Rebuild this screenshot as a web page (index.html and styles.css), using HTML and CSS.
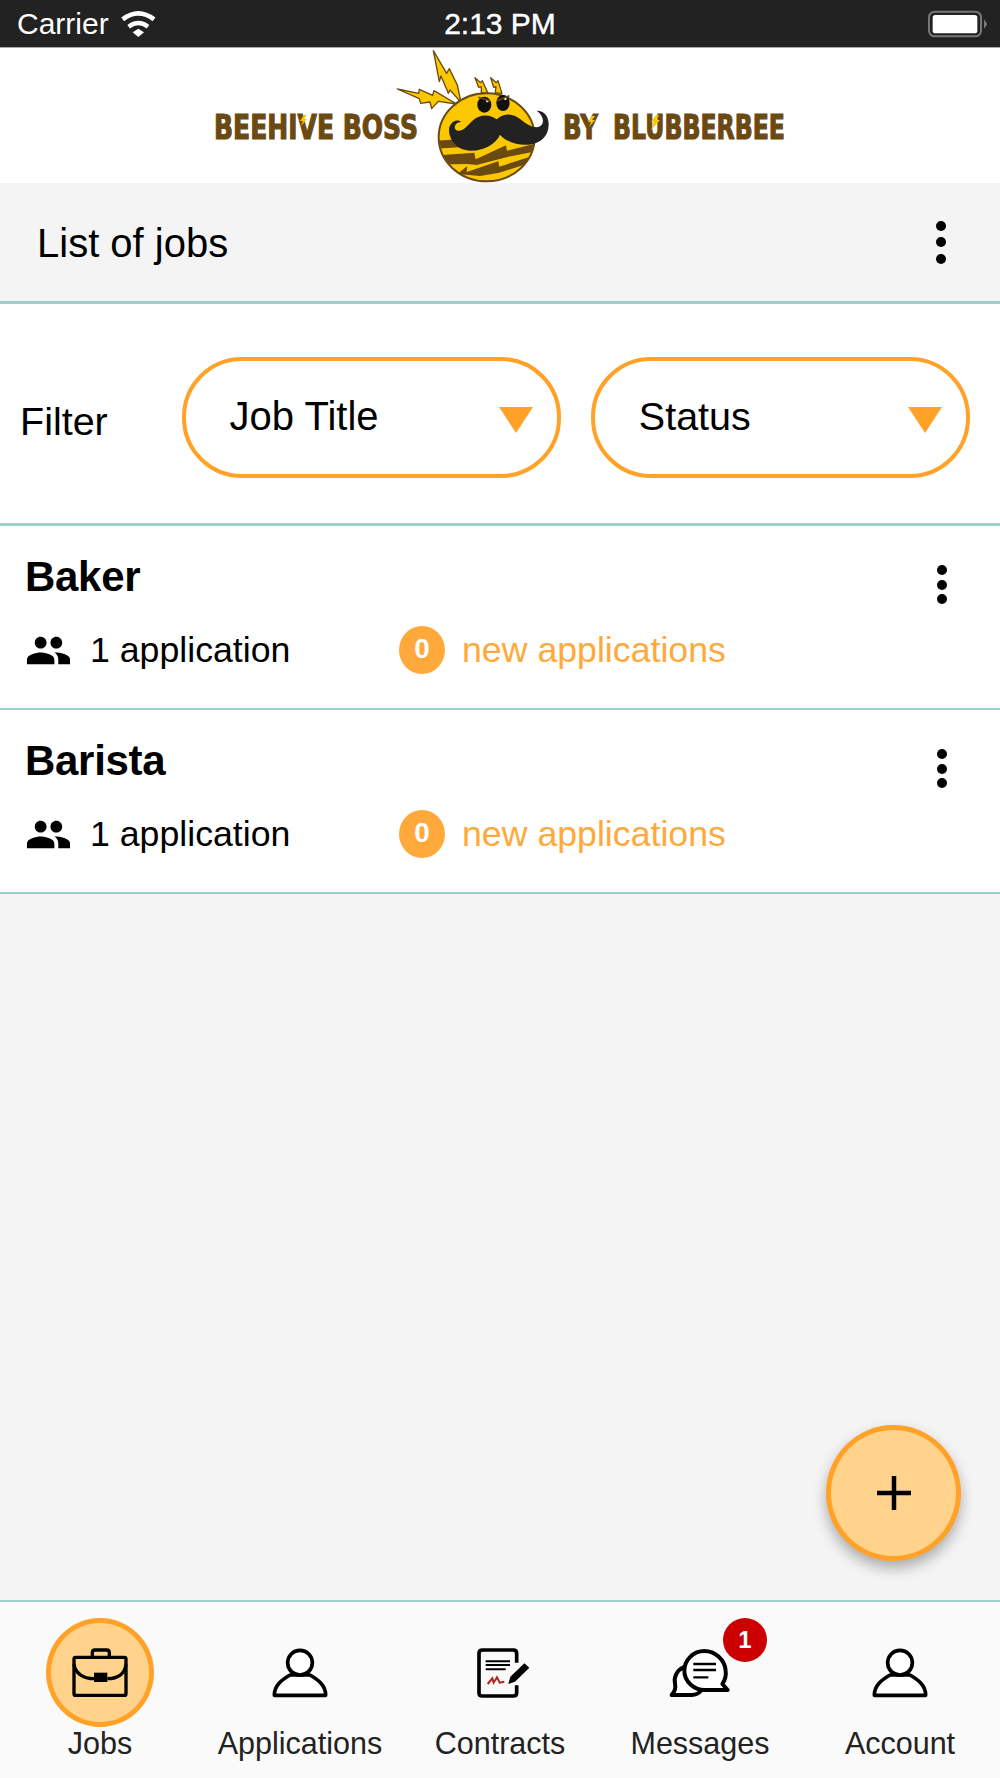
FILE: index.html
```html
<!DOCTYPE html>
<html lang="en">
<head>
    <meta charset="UTF-8">
    <meta name="viewport" content="width=device-width, initial-scale=1.0">
    <title>Beehive Boss</title>
    <link rel="stylesheet" href="styles.css">
</head>
<body>
    <div class="status-bar">
        <div class="status-left">
            <span class="carrier">Carrier</span>
            <svg class="wifi" width="60" height="48" viewBox="0 0 180 144">
                <path d="M38 58Q85 22 132 58" fill="none" stroke="#fff" stroke-width="14"/>
                <path d="M56 80Q85 58 114 80" fill="none" stroke="#fff" stroke-width="13"/>
                <path d="M68 97L85 86L102 97L85 111Z" fill="#fff"/>
            </svg>
        </div>
        <span class="time">2:13 PM</span>
        <svg class="battery" width="80" height="48" viewBox="0 0 240 144">
            <rect x="27" y="35" width="156" height="74" rx="17" fill="none" stroke="#777" stroke-width="6"/>
            <rect x="38" y="45" width="134" height="55" rx="8" fill="#fff"/>
            <path d="M192 58L202 72L192 87Z" fill="#777"/>
        </svg>
    </div>

    <header class="logo-bar">
        <svg class="logo" width="600" height="136" viewBox="200 48 600 136">
            <text class="logo-text" x="214" y="139" textLength="204" lengthAdjust="spacingAndGlyphs">BEEHIVE BOSS</text>
            <text class="logo-text" x="563" y="139" textLength="35" lengthAdjust="spacingAndGlyphs">BY</text>
            <text class="logo-text" x="613" y="139" textLength="172" lengthAdjust="spacingAndGlyphs">BLUBBERBEE</text>
            <path d="M304 115L300 121H303L301 126L307 119H304L307 115Z" fill="#fbc800"/>
            <path d="M592 116L588 122H591L589 127L595 120H592L595 116Z" fill="#fbc800"/>
            <path d="M656 115L651 122H654L651 130L660 120H656L659 115Z" fill="#fbc800"/>
            <g transform="translate(380 40) scale(.3333)">
                <g fill="#fbc800" stroke="#6b4a12" stroke-width="4" stroke-linejoin="round">
                    <path d="M160 32L200 100L208 86L232 135L243 187L210 150L205 160L183 108L178 125Z"/>
                    <path d="M52 147L116 160L118 148L158 166L162 152L230 192L175 184L155 206L150 186L122 190L118 176Z"/>
                    <path d="M285 113L302 128L307 122L324 160L304 158L304 140L296 142Z"/>
                    <path d="M332 113L349 128L354 122L366 160L346 158L348 140L341 142Z"/>
                </g>
                <ellipse cx="320" cy="292" rx="144" ry="132" fill="#fbc800" stroke="#6b4a12" stroke-width="6"/>
                <clipPath id="beeBody"><ellipse cx="320" cy="292" rx="142" ry="130"/></clipPath>
                <g clip-path="url(#beeBody)" fill="#6b4a12">
                    <path d="M170 302L240 298L240 322L170 326Z"/>
                    <path d="M170 346L283 338L287 358L378 316L381 332L470 310L470 334L385 350L290 375L262 372L170 374Z"/>
                    <path d="M232 402L262 378L260 396L355 364L358 380L450 350L440 372L358 398L300 408Z"/>
                </g>
                <path d="M243 246C232 236 214 244 208 262C202 290 226 332 272 332C318 332 350 308 360 284C372 300 410 318 446 314C484 310 506 286 506 254C506 230 494 212 470 212C488 224 494 244 484 256C472 268 448 260 424 240C402 222 378 216 350 238C330 222 300 222 280 240C262 256 250 276 232 272C218 268 224 246 243 246Z" fill="#222"/>
                <ellipse cx="313" cy="194" rx="21" ry="24" fill="#111"/>
                <ellipse cx="369" cy="189" rx="20" ry="24" fill="#111"/>
                <circle cx="322" cy="183" r="4" fill="#fff"/>
                <circle cx="376" cy="176" r="4" fill="#fff"/>
                <path d="M295 172L330 183M388 167L352 182" stroke="#6b4a12" stroke-width="5"/>
            </g>
        </svg>
    </header>

    <main class="content">
        <div class="title-bar">
            <h1>List of jobs</h1>
            <div class="kebab"><span></span><span></span><span></span></div>
        </div>

        <div class="filter-bar">
            <span class="filter-label">Filter</span>
            <div class="pill pill-title">Job Title<i class="arrow"></i></div>
            <div class="pill pill-status">Status<i class="arrow"></i></div>
        </div>

        <div class="job">
            <div class="job-main">
                <h2>Baker</h2>
                <div class="job-stats">
                    <div class="job-count">
                        <svg width="47" height="47" viewBox="0 0 24 24"><path d="M16 11c1.66 0 2.99-1.34 2.99-3S17.66 5 16 5c-1.66 0-3 1.34-3 3s1.34 3 3 3zm-8 0c1.66 0 2.99-1.34 2.99-3S9.66 5 8 5C6.34 5 5 6.34 5 8s1.34 3 3 3zm0 2c-2.33 0-7 1.17-7 3.5V19h14v-2.5c0-2.33-4.67-3.5-7-3.5zm8 0c-.29 0-.62.02-.97.05 1.16.84 1.97 1.97 1.97 3.45V19h6v-2.5c0-2.33-4.67-3.5-7-3.5z"/></svg>
                        <span>1 application</span>
                    </div>
                    <span class="count-badge">0</span>
                    <span class="new-label">new applications</span>
                </div>
            </div>
            <div class="kebab"><span></span><span></span><span></span></div>
        </div>

        <div class="job">
            <div class="job-main">
                <h2>Barista</h2>
                <div class="job-stats">
                    <div class="job-count">
                        <svg width="47" height="47" viewBox="0 0 24 24"><path d="M16 11c1.66 0 2.99-1.34 2.99-3S17.66 5 16 5c-1.66 0-3 1.34-3 3s1.34 3 3 3zm-8 0c1.66 0 2.99-1.34 2.99-3S9.66 5 8 5C6.34 5 5 6.34 5 8s1.34 3 3 3zm0 2c-2.33 0-7 1.17-7 3.5V19h14v-2.5c0-2.33-4.67-3.5-7-3.5zm8 0c-.29 0-.62.02-.97.05 1.16.84 1.97 1.97 1.97 3.45V19h6v-2.5c0-2.33-4.67-3.5-7-3.5z"/></svg>
                        <span>1 application</span>
                    </div>
                    <span class="count-badge">0</span>
                    <span class="new-label">new applications</span>
                </div>
            </div>
            <div class="kebab"><span></span><span></span><span></span></div>
        </div>
    </main>

    <button class="fab" type="button" aria-label="Add job">
        <svg width="34" height="34" viewBox="0 0 34 34"><path d="M17 0V34M0 17H34" stroke="#000" stroke-width="4.5"/></svg>
    </button>

    <nav class="tab-bar">
        <div class="tab tab-active">
            <div class="tab-icon">
                <svg width="70" height="65" viewBox="0 0 210 195" fill="none" stroke="#000" stroke-width="10" stroke-linejoin="round">
                    <rect x="27" y="52" width="156" height="114" rx="5"/>
                    <path d="M82 50V38Q82 30 90 30H125Q133 30 133 38V50"/>
                    <path d="M27 72C30 100 55 116 87 116M127 116C160 116 180 100 183 72"/>
                    <rect x="87" y="98" width="40" height="28" fill="#000" stroke="none"/>
                </svg>
            </div>
            <span>Jobs</span>
        </div>
        <div class="tab">
            <div class="tab-icon">
                <svg width="70" height="65" viewBox="0 0 210 195" fill="#fff" stroke="#000" stroke-width="11" stroke-linejoin="round">
                    <path d="M28 166C28 135 50 120 75 105H135C160 120 182 135 182 166Z"/>
                    <circle cx="105" cy="68" r="37"/>
                </svg>
            </div>
            <span>Applications</span>
        </div>
        <div class="tab">
            <div class="tab-icon">
                <svg width="70" height="65" viewBox="0 0 210 195" fill="none" stroke="#000" stroke-linecap="butt">
                    <path d="M155 68V40Q155 30 145 30H52Q42 30 42 40V158Q42 168 52 168H145Q155 168 155 158V136" stroke-width="11"/>
                    <path d="M62 64H135M62 75H135M62 88H122" stroke-width="6"/>
                    <path d="M68 132L82 115L86 128L96 112L104 128L118 125" stroke="#b3261e" stroke-width="6"/>
                    <path d="M130 132L136 110L178 70L193 83L150 125Z" fill="#000" stroke="none"/>
                </svg>
            </div>
            <span>Contracts</span>
        </div>
        <div class="tab">
            <div class="tab-icon">
                <svg width="70" height="65" viewBox="0 0 210 195" fill="#fff" stroke="#000" stroke-width="12" stroke-linejoin="round">
                    <path d="M55 82C35 92 26 112 30 130C33 145 30 155 20 165H80C92 165 102 160 108 152Z"/>
                    <path d="M118 33C85 33 58 60 58 92C58 125 88 150 118 150H188L172 132C180 120 184 106 182 92C180 60 150 33 118 33Z"/>
                    <path d="M85 72H153M85 90H153M85 112H130" fill="none" stroke-width="7"/>
                </svg>
                <span class="tab-badge">1</span>
            </div>
            <span>Messages</span>
        </div>
        <div class="tab">
            <div class="tab-icon">
                <svg width="70" height="65" viewBox="0 0 210 195" fill="#fff" stroke="#000" stroke-width="11" stroke-linejoin="round">
                    <path d="M28 166C28 135 50 120 75 105H135C160 120 182 135 182 166Z"/>
                    <circle cx="105" cy="68" r="37"/>
                </svg>
            </div>
            <span>Account</span>
        </div>
    </nav>
</body>
</html>
```

FILE: styles.css
```css
* {
    box-sizing: border-box;
}
html, body {
    margin: 0;
    height: 100%;
}
body {
    position: relative;
    display: flex;
    flex-direction: column;
    height: 1778px;
    overflow: hidden;
    font-family: "Liberation Sans", Arial, sans-serif;
    color: #000;
    background: #f4f4f4;
}

/* status bar */
.status-bar {
    display: grid;
    grid-template-columns: 1fr auto 1fr;
    align-items: center;
    height: 48px;
    border-bottom: 1px solid #a8a8a8;
    background: #222;
    color: #fff;
}
.status-left {
    display: flex;
    align-items: center;
    padding-left: 17px;
}
.carrier {
    font-size: 30px;
}
.wifi {
    margin-left: 1px;
}
.time {
    font-size: 30px;
    -webkit-text-stroke: .4px #fff;
}
.battery {
    justify-self: end;
}

/* logo */
.logo-bar {
    display: flex;
    justify-content: center;
    height: 135px;
    background: #fff;
}
.logo {
    flex: none;
    overflow: visible;
}
.logo-text {
    font-family: "DejaVu Sans", sans-serif;
    font-size: 33px;
    font-weight: bold;
    fill: #6b4a12;
    stroke: #6b4a12;
    stroke-width: 1.2px;
}

.content {
    flex: 1;
}
.title-bar {
    display: flex;
    justify-content: space-between;
    align-items: center;
    height: 121px;
    padding: 0 54px 0 37px;
    border-bottom: 3px solid #9dd0c8;
}
.title-bar h1 {
    margin: 2px 0 0;
    font-size: 40px;
    font-weight: normal;
}

.kebab {
    display: flex;
    flex-direction: column;
    gap: 6.5px;
    width: 10px;
}
.kebab span {
    width: 10px;
    height: 10px;
    border-radius: 50%;
    background: #000;
}

/* filter row */
.filter-bar {
    display: flex;
    align-items: center;
    height: 222px;
    padding: 8px 0 0 20px;
    border-bottom: 3px solid #9dd0c8;
    background: #fff;
}
.filter-label {
    width: 162px;
    padding-top: 8px;
    font-size: 39.5px;
}
.pill {
    position: relative;
    width: 380px;
    height: 121px;
    margin-right: 30px;
    padding: 33px 0 0 44px;
    border: 4px solid #ffa227;
    border-radius: 60px;
    font-size: 40px;
}
.pill-status {
    font-size: 39.5px;
}
.arrow {
    position: absolute;
    right: 24px;
    top: 46px;
    border-left: 17px solid transparent;
    border-right: 17px solid transparent;
    border-top: 26px solid #ffa227;
}

/* job rows */
.job {
    display: flex;
    justify-content: space-between;
    height: 184px;
    padding: 27px 53px 0 25px;
    border-bottom: 2px solid #9dd0c8;
    background: #fff;
}
.job h2 {
    margin: 0 0 25px;
    font-size: 42px;
    line-height: 48px;
    letter-spacing: -.3px;
}
.job .kebab {
    gap: 4.5px;
    margin-top: 12px;
}
.job-stats {
    display: flex;
    align-items: center;
    font-size: 35.7px;
}
.job-count {
    display: flex;
    align-items: center;
    gap: 18px;
    width: 374px;
}
.count-badge {
    width: 46px;
    height: 48px;
    border-radius: 50%;
    background: #ffa93c;
    color: #fff;
    font-size: 28px;
    font-weight: bold;
    line-height: 46px;
    text-align: center;
}
.new-label {
    margin-left: 17px;
    color: #ffa93c;
}

/* add button */
.fab {
    position: absolute;
    left: 826px;
    top: 1425px;
    display: flex;
    justify-content: center;
    align-items: center;
    width: 135px;
    height: 136px;
    padding: 0;
    border: 5px solid #ffa227;
    border-radius: 50%;
    background: #ffd38c;
    box-shadow: 0 7px 14px rgba(0, 0, 0, 0.3);
}

/* bottom tabs */
.tab-bar {
    display: grid;
    grid-template-columns: repeat(5, 1fr);
    height: 178px;
    padding-top: 38px;
    border-top: 2px solid #9dd0c8;
    background: #fafafa;
    color: #222;
    font-size: 30.5px;
    text-align: center;
}
.tab {
    display: flex;
    flex-direction: column;
    align-items: center;
}
.tab-icon {
    position: relative;
    width: 70px;
    height: 65px;
    margin-bottom: 21px;
}
.tab-icon svg {
    position: relative;
    display: block;
}
.tab-active .tab-icon::before {
    content: "";
    position: absolute;
    left: -19px;
    top: -22px;
    width: 108px;
    height: 109px;
    box-sizing: border-box;
    border: 5px solid #ffa227;
    border-radius: 50%;
    background: #ffd38c;
}
.tab span {
    line-height: 34px;
}
.tab .tab-badge {
    position: absolute;
    left: 58px;
    top: -22px;
    width: 44px;
    height: 44px;
    border-radius: 50%;
    background: #cc0000;
    color: #fff;
    font-size: 24px;
    font-weight: bold;
    line-height: 44px;
}
```
